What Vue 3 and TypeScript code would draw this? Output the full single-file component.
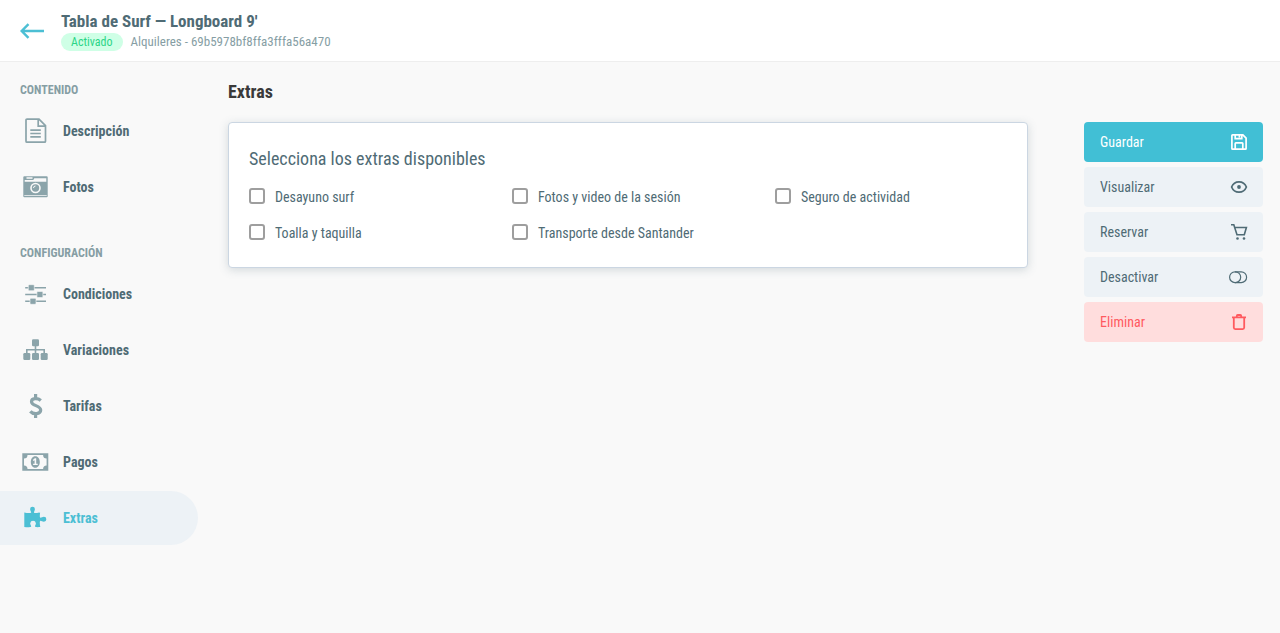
<script setup lang="ts">
import { ref } from 'vue'

type Extra = { id: string; label: string }

const extras: Extra[] = [
  { id: 'desayuno', label: 'Desayuno surf' },
  { id: 'fotos', label: 'Fotos y video de la sesión' },
  { id: 'seguro', label: 'Seguro de actividad' },
  { id: 'toalla', label: 'Toalla y taquilla' },
  { id: 'transporte', label: 'Transporte desde Santander' },
]
const selected = ref<string[]>([])
</script>

<template>
  <div class="page">
    <header class="topbar">
      <a class="back" href="#" aria-label="Volver">
        <svg width="24" height="16" viewBox="0 0 24 16" fill="none" stroke="currentColor" stroke-width="2.4">
          <path d="M24 8H2M8.500 1.200 1.700 8l6.800 6.800" />
        </svg>
      </a>
      <div class="heading">
        <h1>Tabla de Surf — Longboard 9'</h1>
        <div class="meta">
          <span class="badge">Activado</span>
          <span>Alquileres - 69b5978bf8ffa3fffa56a470</span>
        </div>
      </div>
    </header>

    <div class="layout">
      <nav class="sidebar">
        <h3>CONTENIDO</h3>
        <ul>
          <li>
            <a href="#">
              <svg viewBox="0 0 28 28" fill="none" stroke="currentColor" stroke-width="1.700">
                <path d="M6 2.200H18l6.500 6.500v15.500q0 1-1 1H6q-1 0-1-1V3.200q0-1 1-1zM17.200 2.200v7h7M9.300 13.200h10.500M9.300 16.500h10.500M9.300 19.800h10.500" />
              </svg>
              Descripción
            </a>
          </li>
          <li>
            <a href="#">
              <svg viewBox="0 0 28 28" fill="currentColor">
                <path fill-rule="evenodd" d="M3.300 3.200h22.400q1 0 1 1v19q0 1-1 1H3.300q-1 0-1-1v-19q0-1 1-1zM13.300 5.200 12.300 7H3.700v1.800h21.600V5.200zM5.500 4.300v1.400h6V4.300zM14.500 9.700a5.300 5.300 0 1 0 0 10.600 5.300 5.300 0 0 0 0-10.600zM3.300 22.300v.7h22.400v-.7z" />
                <circle cx="14.500" cy="15" r="3.700" />
                <path d="M12.500 15a2 2 0 0 1 2-2" fill="none" stroke="#f9f9f9" />
              </svg>
              Fotos
            </a>
          </li>
        </ul>
        <h3>CONFIGURACIÓN</h3>
        <ul>
          <li>
            <a href="#">
              <svg viewBox="0 0 28 28" fill="currentColor">
                <path d="M4.200 6.900H25v1.600H4.200zM4.200 13.700H25v1.600H4.200zM4.200 20.500H25v1.600H4.200z" />
                <g stroke="#f9f9f9" stroke-width=".6">
                  <rect x="7.300" y="4.700" width="6" height="6" rx="1" />
                  <rect x="15.900" y="11.500" width="6" height="6" rx="1" />
                  <rect x="9" y="18.300" width="6" height="6" rx="1" />
                </g>
              </svg>
              Condiciones
            </a>
          </li>
          <li>
            <a href="#">
              <svg viewBox="0 0 28 28" fill="currentColor">
                <rect x="11" y="3.200" width="7" height="7" rx="1.200" />
                <rect x="2.300" y="17" width="7" height="7" rx="1.200" />
                <rect x="11" y="17" width="7" height="7" rx="1.200" />
                <rect x="19.700" y="17" width="7" height="7" rx="1.200" />
                <path d="M14.500 9v9M5.800 18v-4.300h17.400V18" fill="none" stroke="currentColor" stroke-width="1.600" />
              </svg>
              Variaciones
            </a>
          </li>
          <li>
            <a href="#">
              <svg viewBox="0 0 28 28" fill="none" stroke="currentColor" stroke-width="3.200">
                <path d="M14.600 2v3.500M14.600 22.500V26M19.800 8.500c-3-2.700-9.300-2.600-9.300 1.200 0 4.400 9.200 3.500 9.200 8.400 0 4.400-7.600 4.600-10.400 1.300" />
              </svg>
              Tarifas
            </a>
          </li>
          <li>
            <a href="#">
              <svg viewBox="0 0 28 28" fill="currentColor">
                <path fill-rule="evenodd" d="M1.300 5.200h26v17.600h-26zM6.500 7A3.500 3.500 0 0 1 3 10.500v7A3.500 3.500 0 0 1 6.500 21h15.600a3.500 3.500 0 0 1 3.500-3.500v-7A3.500 3.500 0 0 1 22.100 7z" />
                <path fill-rule="evenodd" d="M14.300 8.200c2.800 0 4.500 2.700 4.500 5.800s-1.700 5.800-4.500 5.800-4.500-2.700-4.500-5.800 1.700-5.800 4.500-5.800zM13.800 10.300l-2 1.800.8.900 1-.7v3.500h-1.500v1.200h4.600v-1.200h-1.500v-5.500z" />
              </svg>
              Pagos
            </a>
          </li>
          <li>
            <a href="#" class="active" aria-current="page">
              <svg viewBox="0 0 28 28" fill="currentColor">
                <path d="M3.300 8.500c2.300.4 5 .9 6.700.3.700-.5-.9-2-.9-3.700a2.400 2.400 0 0 1 4.800 0c0 1.700-1.400 3.100-.8 3.700 1.300.5 4.300.1 6-.2-.2 2-.6 4.200.1 5 .7.700 2-.8 3.700-.8a2.400 2.400 0 0 1 0 4.900c-1.800 0-3-1.500-3.700-.8-.8.800-.3 4.100.1 6.100-2 .2-4.300.3-5.100-.3-.8-.7.700-1.800.7-3.500a2.900 2.900 0 0 0-5.700 0c0 1.600 1.500 2.900.8 3.500-.9.700-4.400.4-6.700.2z" />
              </svg>
              Extras
            </a>
          </li>
        </ul>
      </nav>

      <main class="content">
        <h2>Extras</h2>
        <div class="columns">
          <section class="card">
            <h4>Selecciona los extras disponibles</h4>
            <div class="options">
              <label v-for="extra in extras" :key="extra.id">
                <input v-model="selected" type="checkbox" :value="extra.id" />
                <span>{{ extra.label }}</span>
              </label>
            </div>
          </section>

          <aside class="actions">
            <button type="button" class="primary">
              Guardar
              <svg viewBox="0 0 20 20" fill="none" stroke="currentColor" stroke-width="1.700">
                <path d="M3.600 2.900h10.300l3.200 3.200v10.300q0 .7-.7.700H3.600q-.7 0-.7-.7V3.600q0-.7.700-.7zM6.200 3v3.600h6.600V3M6.200 17v-5.500q0-.7.700-.7h6.200q.7 0 .7.700V17M10.400 3v2.600" />
              </svg>
            </button>
            <button type="button">
              Visualizar
              <svg viewBox="0 0 20 20" fill="none" stroke="currentColor" stroke-width="1.700">
                <path d="M2.600 10C4 6.500 6.800 4.800 10 4.800s6 1.700 7.400 5.200c-1.400 3.500-4.200 5.200-7.400 5.200S4 13.500 2.600 10z" />
                <circle cx="10" cy="10" r="1.900" fill="currentColor" stroke="none" />
              </svg>
            </button>
            <button type="button">
              Reservar
              <svg viewBox="0 0 20 20" fill="none" stroke="currentColor" stroke-width="1.600">
                <path d="M2 2.700h2.800L8 12.800h7.300L17.400 5.500H5.700" />
                <circle cx="8.500" cy="16.500" r="1.300" fill="currentColor" stroke="none" />
                <circle cx="15" cy="16.500" r="1.300" fill="currentColor" stroke="none" />
              </svg>
            </button>
            <button type="button">
              Desactivar
              <svg viewBox="0 0 20 20" fill="none" stroke="currentColor" stroke-width="1.200">
                <rect x="0.600" y="4.800" width="17" height="10.800" rx="5.400" />
                <path d="M6 4.800h.3a5.400 5.400 0 0 1 0 10.800H6" />
              </svg>
            </button>
            <button type="button" class="danger">
              Eliminar
              <svg viewBox="0 0 20 20" fill="none" stroke="currentColor" stroke-width="1.800">
                <path d="M3 5.300h14M4.800 5.300v10.300q0 1.500 1.500 1.500h7.400q1.500 0 1.500-1.500V5.300M7.800 5V3.900q0-.9.900-.9h2.600q.9 0 .9.900V5" />
              </svg>
            </button>
          </aside>
        </div>
      </main>
    </div>
  </div>
</template>

<style>
body {
  margin: 0;
  background: #f9f9f9;
}
</style>

<style scoped>
.page {
  min-height: 100vh;
  font-family: "Roboto Condensed", "Liberation Sans Narrow", "Roboto", sans-serif;
  font-size: 14px;
  line-height: 20px;
  color: #4f6b75;
}
h1, h2, h3, h4, ul {
  margin: 0;
  padding: 0;
}
svg {
  display: block;
  flex: none;
}
.topbar {
  display: flex;
  align-items: center;
  gap: 17px;
  padding: 11px 20px 10px;
  background: #fff;
  border-bottom: 1px solid #eee;
}
.back {
  color: #4cbfd4;
}
h1 {
  font-size: 17px;
  line-height: 20px;
  font-weight: 700;
}
.meta {
  display: flex;
  align-items: center;
  gap: 8px;
  margin-top: 2px;
  font-size: 13px;
  line-height: 18px;
  color: #869ea4;
}
.badge {
  padding: 0 10px;
  border-radius: 9px;
  background: #cfffe6;
  font-size: 12px;
  color: #2bd586;
}
.layout {
  display: flex;
}
.sidebar {
  flex: none;
  width: 198px;
  padding-top: 18px;
}
h3 {
  padding-left: 20px;
  margin-bottom: 4px;
  font-size: 12px;
  line-height: 20px;
  font-weight: 700;
  color: #869ea4;
}
ul {
  display: flex;
  flex-direction: column;
  gap: 2px;
  list-style: none;
}
ul + h3 {
  margin-top: 29px;
}
.sidebar a {
  display: flex;
  align-items: center;
  gap: 14px;
  height: 54px;
  padding-left: 21px;
  border-radius: 0 27px 27px 0;
  font-weight: 700;
  color: #4f6b75;
  text-decoration: none;
}
.sidebar svg {
  width: 28px;
  height: 28px;
  color: #8ba4aa;
}
.sidebar .active,
.sidebar .active svg {
  color: #4cbfd4;
}
.sidebar .active {
  background: #edf2f6;
}
.content {
  flex: 1;
  min-width: 0;
  padding: 20px 17px 20px 30px;
}
h2 {
  font-size: 18px;
  line-height: 20px;
  font-weight: 700;
  color: #3a3a3a;
}
.columns {
  display: flex;
  align-items: flex-start;
  gap: 56px;
  margin-top: 20px;
}
.card {
  flex: 1;
  padding: 24px 20px;
  background: #fff;
  border: 1px solid #cbd6e2;
  border-radius: 4px;
  box-shadow: 0 2px 10px rgba(79, 107, 117, 0.22);
}
h4 {
  font-size: 18px;
  line-height: 24px;
  font-weight: 400;
}
.options {
  display: grid;
  grid-template-columns: repeat(3, 1fr);
  gap: 16px 31px;
  margin-top: 16px;
}
.options label {
  display: flex;
  align-items: flex-start;
  gap: 10px;
}
.options input {
  appearance: none;
  flex: none;
  width: 16px;
  height: 16px;
  margin: 1px 0;
  border: 2px solid #9e9e9e;
  border-radius: 3px;
  background: #fff;
}
.options input:checked {
  border-color: #41bfd5;
  background: #41bfd5;
}
.actions {
  flex: none;
  display: flex;
  flex-direction: column;
  gap: 5px;
  width: 179px;
}
button {
  display: flex;
  align-items: center;
  justify-content: space-between;
  height: 40px;
  padding: 0 14px 0 16px;
  border: 0;
  border-radius: 4px;
  background: #edf2f6;
  font: inherit;
  color: #4f6b75;
}
button svg {
  width: 20px;
  height: 20px;
}
.primary {
  background: #41bfd5;
  color: #fff;
}
.danger {
  background: #ffdddd;
  color: #ff5a5f;
}
</style>
